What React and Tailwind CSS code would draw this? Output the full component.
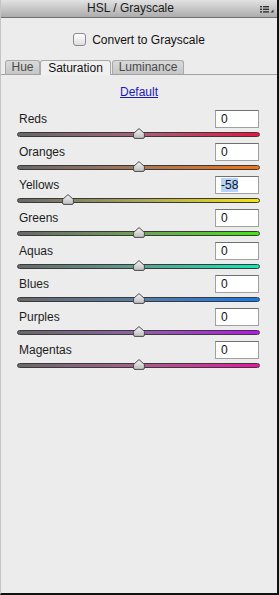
import React from "react";

const rows = [
  { name: "Reds", value: 0, track: "bg-[linear-gradient(to_right,#686868,#a8607a,#ec123e)]" },
  { name: "Oranges", value: 0, track: "bg-[linear-gradient(to_right,#686868,#a87658,#f47410)]" },
  { name: "Yellows", value: -58, track: "bg-[linear-gradient(to_right,#686868,#a8a458,#f4e40c)]" },
  { name: "Greens", value: 0, track: "bg-[linear-gradient(to_right,#686868,#70a058,#40e810)]" },
  { name: "Aquas", value: 0, track: "bg-[linear-gradient(to_right,#686868,#58a090,#10e8b8)]" },
  { name: "Blues", value: 0, track: "bg-[linear-gradient(to_right,#686868,#587ca8,#1478ec)]" },
  { name: "Purples", value: 0, track: "bg-[linear-gradient(to_right,#686868,#9060a8,#b814ec)]" },
  { name: "Magentas", value: 0, track: "bg-[linear-gradient(to_right,#686868,#a85e8c,#ec14a4)]" },
];

function Thumb() {
  return (
    <svg width="12" height="11" viewBox="0 0 12 11">
      <defs>
        <linearGradient id="tg" x1="0" y1="0" x2="0" y2="1">
          <stop offset="0" stopColor="#f6f6f6" />
          <stop offset="1" stopColor="#bdbdbd" />
        </linearGradient>
      </defs>
      <path
        d="M6 0.6 L11.4 5.4 L11.4 9 Q11.4 10.4 10 10.4 L2 10.4 Q0.6 10.4 0.6 9 L0.6 5.4 Z"
        fill="url(#tg)"
        stroke="#4a4a4a"
        strokeWidth="1"
        strokeLinejoin="round"
      />
    </svg>
  );
}

function MenuIcon() {
  return (
    <svg width="14" height="7" viewBox="0 0 14 7">
      <rect x="0" y="0" width="2" height="1.4" fill="#333" />
      <rect x="3" y="0" width="6" height="1.4" fill="#333" />
      <rect x="0" y="2.6" width="2" height="1.4" fill="#333" />
      <rect x="3" y="2.6" width="6" height="1.4" fill="#333" />
      <rect x="0" y="5.2" width="2" height="1.4" fill="#333" />
      <rect x="3" y="5.2" width="6" height="1.4" fill="#333" />
      <path d="M10.5 6.6 L13.5 6.6 L13.5 3.6 Z" fill="#333" />
    </svg>
  );
}

export default function App() {
  return (
    <div
      className="w-[279px] h-[595px] flex flex-col bg-[#ececec] border-l border-l-[#c4c4c4] border-r-2 border-r-[#111] border-b-2 border-b-[#111] text-[12px] text-[#1c1c1c]"
      style={{ fontFamily: '"Liberation Sans", Arial, sans-serif' }}
    >
      {/* Title bar */}
      <div className="h-[18px] flex items-center bg-[linear-gradient(to_bottom,#e2e2e2,#acacac)] border-b border-b-[#707070]">
        <div className="flex-1 text-center text-[12px] leading-[17px] text-[#1a1a1a]">HSL / Grayscale</div>
        <div className="w-[17px] flex items-center pt-[1px]">
          <MenuIcon />
        </div>
      </div>

      {/* Checkbox */}
      <div className="mt-[15px] h-[13px] flex items-center justify-center gap-[6px]">
        <div className="w-[13px] h-[13px] rounded-[3px] border border-[#8a8a8a] bg-[linear-gradient(to_bottom,#ffffff,#dedede)] shadow-[inset_0_1px_0_#fff]" />
        <span className="text-[12px] leading-[14px] text-[#111]">Convert to Grayscale</span>
      </div>

      {/* Tabs */}
      <div className="mt-[14px] h-[15px] flex items-end border-b border-b-[#a2a2a2] pl-[4px]">
        <div className="w-[35px] h-[14px] rounded-t-[3px] border border-b-0 border-[#a8a8a8] bg-[linear-gradient(to_bottom,#dadada,#c6c6c6)] text-center text-[12px] leading-[13px] text-[#4a4a4a]">
          Hue
        </div>
        <div className="w-[71px] h-[15px] -mb-px rounded-t-[3px] border border-b-0 border-[#a8a8a8] bg-[#f0f0f0] text-center text-[12px] leading-[14px] text-[#111]">
          Saturation
        </div>
        <div className="ml-px w-[72px] h-[14px] rounded-t-[3px] border border-b-0 border-[#a8a8a8] bg-[linear-gradient(to_bottom,#dadada,#c6c6c6)] text-center text-[12px] leading-[13px] text-[#4a4a4a]">
          Luminance
        </div>
      </div>

      {/* Default link */}
      <div className="mt-[10px] h-[14px] flex justify-center">
        <span className="text-[12px] leading-[14px] text-[#1a1ab8] underline">Default</span>
      </div>

      {/* Rows */}
      <div className="mt-[11px] flex flex-col gap-[4px] pl-[16px] pr-[17px]">
        {rows.map((r) => {
          const pct = ((r.value + 100) / 200) * 100;
          return (
            <div key={r.name} className="flex flex-col">
              <div className="h-[18px] flex items-center justify-between">
                <span className="ml-[2px] text-[12px] leading-[14px] text-[#1c1c1c]">{r.name}</span>
                <div className="w-[44px] h-[18px] mr-[1px] border border-[#a0a0a0] border-t-[#707070] bg-white flex items-center pl-[5px] text-[12px] leading-[14px] text-[#111]">
                  {r.value === 0 ? (
                    <span>0</span>
                  ) : (
                    <span className="bg-[#b4d4fc]">{String(r.value)}</span>
                  )}
                </div>
              </div>
              <div className="mt-px h-[10px] relative">
                <div className={`mt-[3px] h-[5px] rounded-full border border-[#3a3a3a] ${r.track}`} />
                <div
                  className="absolute top-[-1px] -translate-x-1/2"
                  style={{ left: `${pct}%` }}
                >
                  <Thumb />
                </div>
              </div>
            </div>
          );
        })}
      </div>
    </div>
  );
}
